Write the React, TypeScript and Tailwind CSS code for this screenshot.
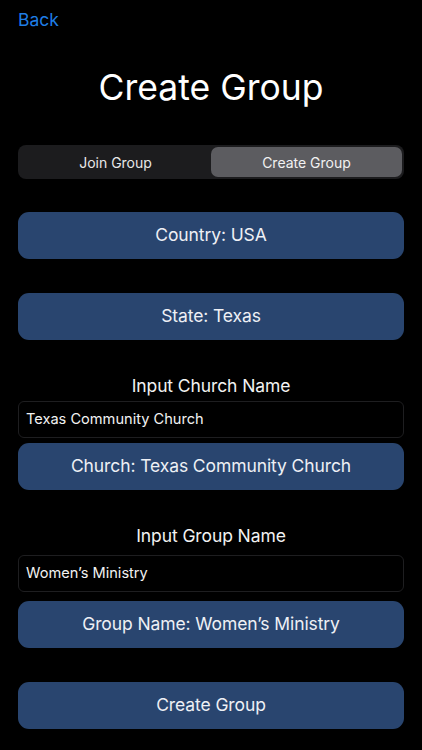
import React from "react";

const font = { fontFamily: "Inter, 'Noto Sans', sans-serif" };

function BlueButton({ label, className = "" }: { label: string; className?: string }) {
  return (
    <div
      className={`h-[47px] w-full rounded-[11px] bg-[#29456f] flex items-center justify-center text-[17.5px] tracking-[-0.1px] text-[#eef0f5] ${className}`}
    >
      {label}
    </div>
  );
}

function Field({ value, className = "" }: { value: string; className?: string }) {
  return (
    <div
      className={`h-[37px] w-full rounded-[6px] border border-[#1e1e20] flex items-center pl-[7px] text-[14.6px] text-[#f2f2f2] ${className}`}
    >
      {value}
    </div>
  );
}

export default function App() {
  return (
    <div className="w-[422px] h-[750px] bg-black overflow-hidden" style={font}>
      <div className="px-[18px] pt-[8px] flex flex-col">
        <div className="h-[24px] leading-[24px] text-[17.5px] text-[#1f7ee6]">Back</div>
        <div className="mt-[34px] h-[44px] leading-[44px] text-[35.5px] text-white text-center">
          Create Group
        </div>
        <div className="mt-[35px] h-[34px] rounded-[8px] bg-[#1c1c1e] flex p-[2px]">
          <div className="flex-1 flex items-center justify-center text-[14px] text-[#e8e8e8]">
            Join Group
          </div>
          <div className="flex-1 rounded-[7px] bg-[#5c5c60] flex items-center justify-center text-[14px] text-[#f2f2f2]">
            Create Group
          </div>
        </div>
        <BlueButton label="Country: USA" className="mt-[33px]" />
        <BlueButton label="State: Texas" className="mt-[34px]" />
        <div className="mt-[34px] h-[24px] leading-[24px] text-[17.5px] tracking-[-0.1px] text-[#f2f2f2] text-center">
          Input Church Name
        </div>
        <Field value="Texas Community Church" className="mt-[3px]" />
        <BlueButton label="Church: Texas Community Church" className="mt-[5px]" />
        <div className="mt-[34px] h-[24px] leading-[24px] text-[17.5px] tracking-[-0.1px] text-[#f2f2f2] text-center">
          Input Group Name
        </div>
        <Field value="Women’s Ministry" className="mt-[7px]" />
        <BlueButton label="Group Name: Women’s Ministry" className="mt-[9px]" />
        <BlueButton label="Create Group" className="mt-[34px]" />
      </div>
    </div>
  );
}
